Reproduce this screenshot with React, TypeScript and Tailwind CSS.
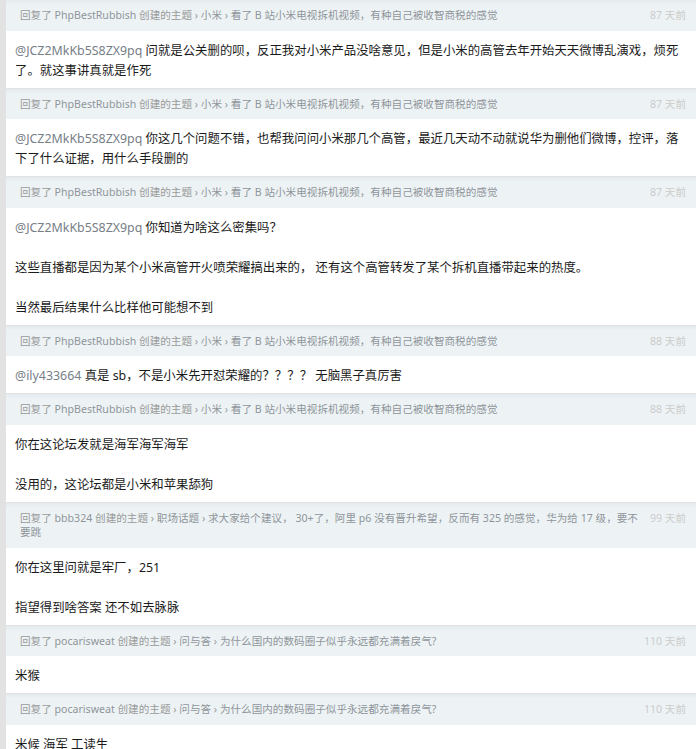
import React from "react";

type Reply = {
  author: string;
  node: string;
  title: React.ReactNode;
  time: string;
  mention?: string;
  paragraphs: string[];
};

const replies: Reply[] = [
  {
    author: "PhpBestRubbish",
    node: "小米",
    title: "看了 B 站小米电视拆机视频，有种自己被收智商税的感觉",
    time: "87 天前",
    mention: "JCZ2MkKb5S8ZX9pq",
    paragraphs: [
      "问就是公关删的呗，反正我对小米产品没啥意见，但是小米的高管去年开始天天微博乱演戏，烦死了。就这事讲真就是作死",
    ],
  },
  {
    author: "PhpBestRubbish",
    node: "小米",
    title: "看了 B 站小米电视拆机视频，有种自己被收智商税的感觉",
    time: "87 天前",
    mention: "JCZ2MkKb5S8ZX9pq",
    paragraphs: [
      "你这几个问题不错，也帮我问问小米那几个高管，最近几天动不动就说华为删他们微博，控评，落下了什么证据，用什么手段删的",
    ],
  },
  {
    author: "PhpBestRubbish",
    node: "小米",
    title: "看了 B 站小米电视拆机视频，有种自己被收智商税的感觉",
    time: "87 天前",
    mention: "JCZ2MkKb5S8ZX9pq",
    paragraphs: [
      "你知道为啥这么密集吗？",
      "这些直播都是因为某个小米高管开火喷荣耀搞出来的， 还有这个高管转发了某个拆机直播带起来的热度。",
      "当然最后结果什么比样他可能想不到",
    ],
  },
  {
    author: "PhpBestRubbish",
    node: "小米",
    title: "看了 B 站小米电视拆机视频，有种自己被收智商税的感觉",
    time: "88 天前",
    mention: "ily433664",
    paragraphs: ["真是 sb，不是小米先开怼荣耀的？？？？ 无脑黑子真厉害"],
  },
  {
    author: "PhpBestRubbish",
    node: "小米",
    title: "看了 B 站小米电视拆机视频，有种自己被收智商税的感觉",
    time: "88 天前",
    paragraphs: ["你在这论坛发就是海军海军海军", "没用的，这论坛都是小米和苹果舔狗"],
  },
  {
    author: "bbb324",
    node: "职场话题",
    title: (
      <>
        求大家给个建议， 30+了，阿里 p6 没有晋升希望，反而有 325 的感觉，华为给 17 级，要不
        <br />
        要跳
      </>
    ),
    time: "99 天前",
    paragraphs: ["你在这里问就是牢厂，251", "指望得到啥答案 还不如去脉脉"],
  },
  {
    author: "pocarisweat",
    node: "问与答",
    title: "为什么国内的数码圈子似乎永远都充满着戾气?",
    time: "110 天前",
    paragraphs: ["米猴"],
  },
  {
    author: "pocarisweat",
    node: "问与答",
    title: "为什么国内的数码圈子似乎永远都充满着戾气?",
    time: "110 天前",
    paragraphs: ["米候 海军 工读生"],
  },
];

function ReplyHeader({ r }: { r: Reply }) {
  return (
    <div className="flex items-start bg-[linear-gradient(#e4eaed,#edf3f5_5px)] pl-[14px] pr-[10px] pt-[8px] pb-[8px] text-[10.6px] leading-[14.5px] text-[#999]">
      <div className="flex-1 min-w-0">
        回复了 <span className="text-[#8f959a]">{r.author}</span> 创建的主题 ›{" "}
        <span className="text-[#8f959a]">{r.node}</span> ›{" "}
        <span className="text-[#8f959a]">{r.title}</span>
      </div>
      <div className="shrink-0 text-[#ccc]">{r.time}</div>
    </div>
  );
}

function ReplyBody({ r }: { r: Reply }) {
  return (
    <div className="border-b border-[#e2e2e2] bg-white pl-[9px] pr-[8px] pt-[10px] pb-[7px] text-[12.4px] leading-[20px] text-[#1b1b1b]">
      {r.paragraphs.map((p, i) => (
        <React.Fragment key={i}>
          {i > 0 && (
            <>
              <br />
              <br />
            </>
          )}
          {i === 0 && r.mention && (
            <>
              <span className="text-[#778087]">@{r.mention}</span>{" "}
            </>
          )}
          {p}
        </React.Fragment>
      ))}
    </div>
  );
}

export default function App() {
  return (
    <div
      className="min-h-[749px] bg-[#e2e2e2] pl-[6px]"
      style={{ fontFamily: '"Noto Sans", "Noto Sans CJK SC", sans-serif' }}
    >
      <div className="bg-white">
        {replies.map((r, i) => (
          <div key={i}>
            <ReplyHeader r={r} />
            <ReplyBody r={r} />
          </div>
        ))}
      </div>
    </div>
  );
}
